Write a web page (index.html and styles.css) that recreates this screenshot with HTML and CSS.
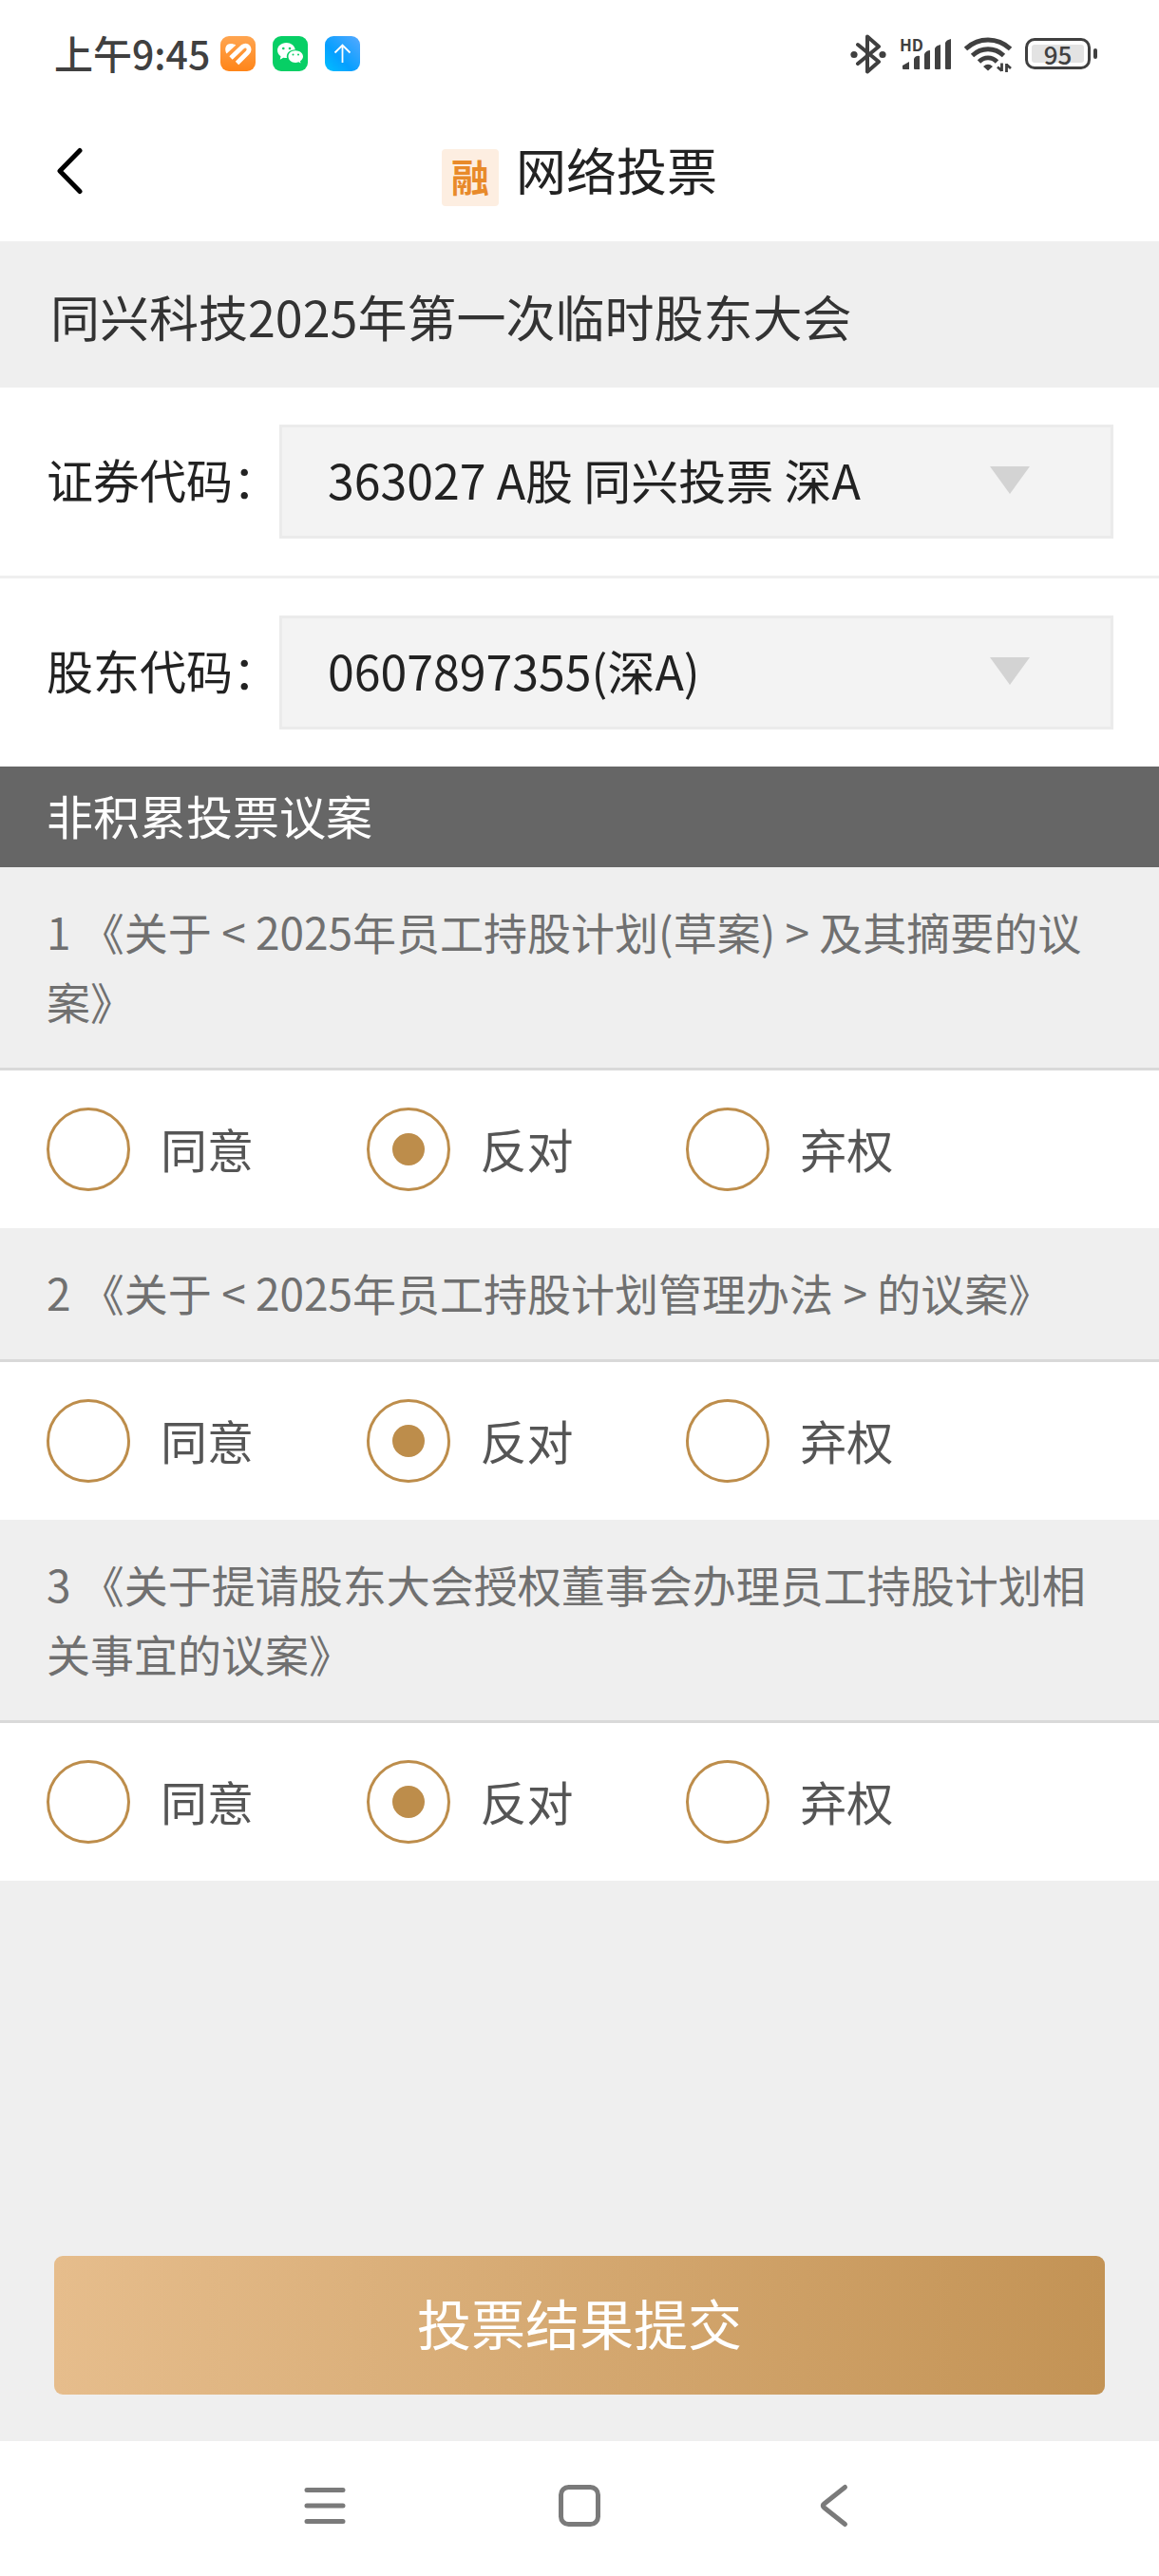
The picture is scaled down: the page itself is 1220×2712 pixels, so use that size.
FILE: index.html
```html
<!DOCTYPE html>
<html lang="zh-CN">
<head>
    <meta charset="UTF-8">
    <meta name="viewport" content="width=device-width, initial-scale=1.0">
    <title>网络投票</title>
    <link rel="stylesheet" href="styles.css">
</head>
<body>
    <div class="status-bar">
        <span class="status-time">上午9:45</span>
        <div class="status-apps">
            <svg viewBox="0 0 37 37">
                <defs>
                    <linearGradient id="fitBg" x1="0" y1="0" x2="0" y2="1">
                        <stop offset="0" stop-color="#ffa550"/>
                        <stop offset="1" stop-color="#ff8519"/>
                    </linearGradient>
                </defs>
                <rect width="37" height="37" rx="9" fill="url(#fitBg)"/>
                <path d="M6.500 18.500C3.500 13 6 8 11 8C13 8 14.500 8.500 16.300 9.500Z" fill="#fff"/>
                <path d="M11 23L22.500 12C25 9.500 28 9.500 29.500 12C30.500 14 30 16 28.500 17.500L17.500 28.500" fill="none" stroke="#fff" stroke-width="4.800"/>
            </svg>
            <svg viewBox="0 0 37 37">
                <rect width="37" height="37" rx="9" fill="#07cf65"/>
                <path d="M14.500 7C8.800 7 5 10.700 5 15C5 17.600 6.300 19.800 8.500 21.300L7.800 24.800L11.300 22.700C12.500 23 13.500 23.100 15 23.100C14 18 18 14.300 23.800 14.200C23 10 19.200 7 14.500 7Z" fill="#fff"/>
                <path d="M24 15.200C19.500 15.200 16.500 18 16.500 21.500C16.500 25 19.500 27.900 24 27.900C25.300 27.900 26.300 27.700 27.300 27.300L29.500 28.600L29 26.300C31 25 32 23.400 32 21.500C32 18 28.500 15.200 24 15.200Z" fill="#fff"/>
                <g fill="#07cf65">
                    <circle cx="11.300" cy="13" r="1.300"/>
                    <circle cx="18" cy="13" r="1.300"/>
                    <circle cx="21.500" cy="19.500" r="1"/>
                    <circle cx="27" cy="19.500" r="1"/>
                </g>
            </svg>
            <svg viewBox="0 0 37 37">
                <defs>
                    <linearGradient id="upBg" x1="0" y1="1" x2="1" y2="0">
                        <stop offset="0" stop-color="#00c0ff"/>
                        <stop offset="0.4" stop-color="#069fff"/>
                        <stop offset="1" stop-color="#56a9ff"/>
                    </linearGradient>
                </defs>
                <rect width="37" height="37" rx="9" fill="url(#upBg)"/>
                <path d="M18.500 28V9.500M10.500 17.500L18.500 9.500L26.500 17.500" fill="none" stroke="#fff" stroke-width="1.800"/>
            </svg>
        </div>
        <div class="status-system">
            <svg class="icon-bluetooth" viewBox="0 0 38 42">
                <path d="M8 11L30 29L18 39.500V2.500L30 13L8 31" fill="none" stroke="#404040" stroke-width="4" stroke-linejoin="round" stroke-linecap="round"/>
                <circle cx="4" cy="21.500" r="3.600" fill="#404040"/>
                <circle cx="34" cy="21.500" r="3.600" fill="#404040"/>
            </svg>
            <div class="signal">
                <span class="signal-hd">HD</span>
                <svg viewBox="0 0 54 34" fill="#404040">
                    <path d="M3 29L10 25V33H4Q3 33 3 32Z"/>
                    <path d="M15 22Q17 18 21 19V33H16Q15 33 15 32Z"/>
                    <path d="M26 17Q28 13 32 13V32Q32 33 31 33H27Q26 33 26 32Z"/>
                    <path d="M37 11Q38 8 43 7V32Q43 33 42 33H38Q37 33 37 32Z"/>
                    <path d="M48 5Q49 2 54 1V32Q54 33 53 33H49Q48 33 48 32Z"/>
                </svg>
            </div>
            <svg class="icon-wifi" viewBox="0 0 50 38" fill="none" stroke="#404040" stroke-width="4.800">
                <path d="M1.500 13.500C15 0.800 35 0.800 48.500 13.500"/>
                <path d="M8.500 20.500C18 11.500 32 11.500 41.500 20.500"/>
                <path d="M15.500 27C21 21.500 29 21.500 34.500 27"/>
                <path d="M25 36.500L20 32Q25 27.500 30 32Z" fill="#404040" stroke="none"/>
                <path d="M39.500 28.500V37M39.500 36.500L35 32.500M44.500 38V29M44.500 30L49 34" stroke-width="2.800"/>
            </svg>
            <div class="battery">
                <span class="battery-level">95</span>
            </div>
        </div>
    </div>

    <header class="page-header">
        <button class="back-btn" aria-label="返回">
            <svg viewBox="0 0 28 50">
                <path d="M24 3.500L3 25L24 46.500" fill="none" stroke="#000" stroke-width="5" stroke-linecap="round" stroke-linejoin="round"/>
            </svg>
        </button>
        <span class="margin-badge">融</span>
        <h1>网络投票</h1>
    </header>

    <main>
        <h2 class="meeting-title">同兴科技2025年第一次临时股东大会</h2>

        <div class="form-row">
            <label for="stockCode">证券代码：</label>
            <div class="select-box">
                <select id="stockCode">
                    <option>363027 A股 同兴投票 深A</option>
                </select>
            </div>
        </div>
        <div class="form-row">
            <label for="holderCode">股东代码：</label>
            <div class="select-box">
                <select id="holderCode">
                    <option>0607897355(深A)</option>
                </select>
            </div>
        </div>

        <h3 class="section-title">非积累投票议案</h3>

        <div class="proposal">
            <p id="proposal1">1 《关于 &lt; 2025年员工持股计划(草案) &gt; 及其摘要的议案》</p>
            <div class="options" role="radiogroup" aria-labelledby="proposal1">
                <label><input type="radio" name="vote1" value="agree">同意</label>
                <label><input type="radio" name="vote1" value="against" checked>反对</label>
                <label><input type="radio" name="vote1" value="abstain">弃权</label>
            </div>
        </div>

        <div class="proposal">
            <p id="proposal2">2 《关于 &lt; 2025年员工持股计划管理办法 &gt; 的议案》</p>
            <div class="options" role="radiogroup" aria-labelledby="proposal2">
                <label><input type="radio" name="vote2" value="agree">同意</label>
                <label><input type="radio" name="vote2" value="against" checked>反对</label>
                <label><input type="radio" name="vote2" value="abstain">弃权</label>
            </div>
        </div>

        <div class="proposal">
            <p id="proposal3">3 《关于提请股东大会授权董事会办理员工持股计划相关事宜的议案》</p>
            <div class="options" role="radiogroup" aria-labelledby="proposal3">
                <label><input type="radio" name="vote3" value="agree">同意</label>
                <label><input type="radio" name="vote3" value="against" checked>反对</label>
                <label><input type="radio" name="vote3" value="abstain">弃权</label>
            </div>
        </div>

        <button class="submit-btn">投票结果提交</button>
    </main>

    <nav class="system-nav">
        <button aria-label="最近任务">
            <svg viewBox="0 0 48 48">
                <path d="M5 7.500H43M5 24H43M5 40.500H43" fill="none" stroke="#7a7a7a" stroke-width="5" stroke-linecap="round"/>
            </svg>
        </button>
        <button aria-label="主屏幕">
            <svg viewBox="0 0 48 48">
                <rect x="4.500" y="4.500" width="39" height="39" rx="8" fill="none" stroke="#7a7a7a" stroke-width="5"/>
            </svg>
        </button>
        <button aria-label="返回上一页">
            <svg viewBox="0 0 48 48">
                <path d="M35.500 4.500L13.500 22Q11 24 13.500 26L35.500 43.500" fill="none" stroke="#7a7a7a" stroke-width="5" stroke-linecap="round"/>
            </svg>
        </button>
    </nav>
</body>
</html>
```

FILE: styles.css
```css
* {
    box-sizing: border-box;
}

body {
    font-family: "Noto Sans CJK SC", sans-serif;
    margin: 0;
    min-height: 100vh;
    display: flex;
    flex-direction: column;
    background-color: white;
    color: #222;
}

h1, h2, h3, p {
    margin: 0;
    font-weight: normal;
}

button {
    font-family: inherit;
    border: none;
    padding: 0;
    background: none;
    cursor: pointer;
}

svg {
    display: block;
}

/* Status bar */
.status-bar {
    display: flex;
    align-items: center;
    height: 106px;
    padding: 7px 65px 0 57px;
    color: #404040;
}

.status-time {
    padding-bottom: 4px;
    font-size: 41px;
    font-weight: 500;
    line-height: 48px;
}

.status-apps {
    display: flex;
    gap: 18px;
    margin-left: 11px;
}

.status-apps svg {
    width: 37px;
    height: 37px;
}

.status-system {
    display: flex;
    align-items: center;
    gap: 14px;
    margin-left: auto;
}

.icon-bluetooth {
    width: 38px;
    height: 42px;
}

.signal {
    position: relative;
}

.signal svg {
    width: 54px;
    height: 34px;
}

.signal-hd {
    position: absolute;
    top: -2px;
    left: 0;
    font-size: 17px;
    font-weight: bold;
    line-height: 17px;
}

.icon-wifi {
    width: 50px;
    height: 38px;
}

.battery {
    position: relative;
    width: 69px;
    height: 33px;
    margin-right: 7px;
    padding: 4px;
    border: 3px solid #404040;
    border-radius: 10px;
}

.battery::after {
    content: "";
    position: absolute;
    top: 8px;
    right: -10px;
    width: 4px;
    height: 11px;
    border-radius: 2px;
    background-color: #404040;
}

.battery-level {
    display: block;
    background-color: #e3e3e3;
    border-radius: 3px;
    font-size: 26px;
    font-weight: 500;
    line-height: 19px;
    text-align: center;
}

/* Page header */
.page-header {
    position: relative;
    display: flex;
    justify-content: center;
    align-items: flex-end;
    gap: 18px;
    padding: 37px 0;
}

.page-header h1 {
    padding-bottom: 4px;
    font-size: 53px;
    line-height: 70px;
}

.back-btn {
    position: absolute;
    top: 0;
    bottom: 0;
    left: 0;
    padding: 0 60px;
}

.back-btn svg {
    width: 28px;
    height: 50px;
}

.margin-badge {
    height: 60px;
    padding: 0 10px 4px;
    border-radius: 4px;
    background-color: #fdeee1;
    color: #e88a2a;
    font-size: 40px;
    font-weight: bold;
    line-height: 56px;
}

main {
    flex: 1;
    display: flex;
    flex-direction: column;
    background-color: #efefef;
}

.meeting-title {
    padding: 41px 53px 37px;
    color: #333;
    font-size: 52px;
    line-height: 76px;
}

/* Account rows */
.form-row {
    display: flex;
    align-items: center;
    padding: 39px 48px 39px 49px;
    background-color: white;
}

.form-row + .form-row {
    border-top: 3px solid #efefef;
}

.form-row label {
    flex: none;
    padding-bottom: 6px;
    font-size: 49px;
    line-height: 72px;
}

.select-box {
    position: relative;
    flex: 1;
}

.select-box::after {
    content: "";
    position: absolute;
    top: 44px;
    right: 88px;
    width: 42px;
    height: 29px;
    background-color: #d3d3d3;
    clip-path: polygon(0 0, 100% 0, 50% 100%);
    pointer-events: none;
}

.select-box select {
    display: block;
    appearance: none;
    width: 100%;
    height: 120px;
    padding: 0 140px 6px 48px;
    border: 3px solid #ebebeb;
    border-radius: 0;
    background-color: #f3f3f3;
    color: #222;
    font-family: inherit;
    font-size: 50px;
}

.section-title {
    padding: 15px 49px 19px;
    background-color: #666;
    color: white;
    font-size: 49px;
    line-height: 72px;
}

/* Proposals */
.proposal p {
    padding: 31px 49px 34px;
    border-bottom: 3px solid #d9d9d9;
    color: #707070;
    font-size: 46px;
    line-height: 73px;
}

.options {
    display: flex;
    padding: 37px 49px 39px;
    background-color: white;
}

.options label {
    flex: 0 0 30%;
    display: flex;
    align-items: baseline;
    gap: 32px;
    color: #555;
    font-size: 49px;
    line-height: 90px;
    cursor: pointer;
}

.options input {
    appearance: none;
    display: grid;
    place-items: center;
    align-self: flex-end;
    width: 88px;
    height: 88px;
    margin: 0;
    border: 3px solid #bd8d4b;
    border-radius: 50%;
}

.options input:checked::before {
    content: "";
    width: 34px;
    height: 34px;
    border-radius: 50%;
    background-color: #bd8d4b;
}

.submit-btn {
    margin: auto 57px 49px;
    height: 146px;
    padding-bottom: 8px;
    border-radius: 9px;
    background: linear-gradient(to right, #e6bd8c, #c39355);
    color: white;
    font-size: 57px;
}

/* System navigation */
.system-nav {
    display: flex;
    padding: 44px 17% 50px;
}

.system-nav button {
    flex: 1;
    display: flex;
    justify-content: center;
}

.system-nav svg {
    width: 48px;
    height: 48px;
}
```
